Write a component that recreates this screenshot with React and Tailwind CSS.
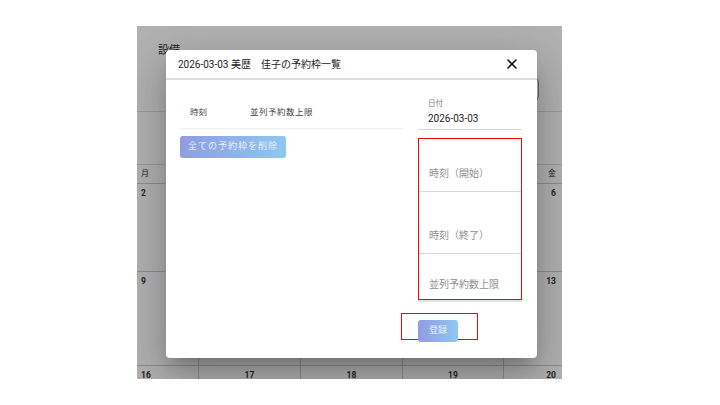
import React from 'react';
import { X } from 'lucide-react';

const font = "font-['Roboto','Noto_Sans_CJK_JP',sans-serif]";

const CalendarBackdrop = () => (
  <div className="h-full w-full bg-white text-[#333]">
    {/* Top settings area */}
    <div className="h-[86px] border-b border-[#ddd] relative">
      <div className="pl-[21px] pt-[17px] text-[11px]">設備</div>
      <div className="absolute right-[23px] top-[52px] h-[22px] w-[200px] rounded border border-[#999]" />
    </div>
    <div className="h-[52px]" />
    {/* Calendar */}
    <div className="border-t border-[#ddd]">
      <div className="grid grid-cols-[61px_102px_102px_101px_59px] h-[18px] text-[8px] items-center">
        <div className="pl-[4px]">月</div>
        <div className="text-center">火</div>
        <div className="text-center">水</div>
        <div className="text-center">木</div>
        <div className="text-right pr-[6px]">金</div>
      </div>
      {[['2', '3', '4', '5', '6'], ['9', '10', '11', '12', '13'], ['16', '17', '18', '19', '20']].map((row, i) => (
        <div key={i} className={`grid grid-cols-[61px_102px_102px_101px_59px] ${i === 0 ? 'h-[88px]' : 'h-[94px]'} border-t border-[#ccc] text-[8.5px] font-bold leading-[10px]`}>
          {row.map((d, j) => (
            <div
              key={d}
              className={`pt-[4px] ${j > 0 ? 'border-l border-[#ccc]' : ''} ${j === 0 ? 'pl-[4px]' : j === 4 ? 'text-right pr-[6px]' : 'text-center'}`}
            >
              {d}
            </div>
          ))}
        </div>
      ))}
    </div>
  </div>
);

const Field = ({ label, h }) => (
  <div className={`${h} border-b border-[#d9d9d9] flex items-end pb-[10px] pl-[10px] text-[10px] leading-[14px] text-[#909090]`}>
    <span>{label}</span>
  </div>
);

export default function App() {
  return (
    <div className={`w-[720px] h-[405px] bg-white ${font}`}>
      <div className="ml-[137px] pt-[26px]">
        <div className="relative w-[425px] h-[353px] overflow-hidden">
          <CalendarBackdrop />
          <div className="absolute inset-0 bg-black/30" />

          {/* Dialog */}
          <div className="absolute left-[29px] top-[24px] w-[371px] h-[308px] bg-white rounded-[4px] shadow-[0_11px_15px_-7px_rgba(0,0,0,0.2),0_24px_38px_3px_rgba(0,0,0,0.14),0_9px_46px_8px_rgba(0,0,0,0.12)]">
            <div className="h-[30px] flex items-center justify-between pl-[12px] pr-[17px] border-b-2 border-[#dcdcdc] text-[10px] text-[#222]">
              <span>2026-03-03 美歴　佳子の予約枠一覧</span>
              <X size={16} strokeWidth={2.4} className="text-[#111]" />
            </div>

            <div className="flex pl-[14px] pt-[16px]">
              {/* Left: slot list */}
              <div className="w-[223px]">
                <div className="h-[33px] flex items-center border-b border-[#eee] text-[8.5px] text-[#444]">
                  <span className="pl-[10px] w-[70px]">時刻</span>
                  <span className="tracking-[0.5px]">並列予約数上限</span>
                </div>
                <button className="mt-[7px] h-[22px] w-[106px] rounded-[3px] bg-gradient-to-r from-[#8f9de1] to-[#8dc8ef] text-[9px] tracking-[1px] text-[#e8eefb]">
                  全ての予約枠を削除
                </button>
              </div>

              {/* Right: form */}
              <div className="ml-[15px] w-[104px]">
                <div className="h-[34px] border-b border-[#d9d9d9] pl-[10px] pt-[3px]">
                  <div className="text-[7.5px] text-[#777] leading-[10px]">日付</div>
                  <div className="text-[10px] text-[#222] leading-[14px] mt-[3px]">2026-03-03</div>
                </div>
                <div className="mt-[8px] border border-solid border-[#ff0000]">
                  <Field label="時刻（開始）" h="h-[53px]" />
                  <Field label="時刻（終了）" h="h-[62px]" />
                  <div className="h-[45px] flex items-end pb-[7px] pl-[10px] text-[10px] leading-[14px] text-[#909090]">
                    <span>並列予約数上限</span>
                  </div>
                </div>
                <div className="h-[2px] bg-[#e3e3e3]" />
                <div className="-ml-[17px] mt-[11px] w-[77px] h-[27px] bg-[#ff0000] p-[1px]">
                  <div className="h-full w-full bg-white pl-[16px] pt-[2px]">
                    <button className="h-[22px] w-[40px] rounded-[3px] bg-gradient-to-r from-[#8f9de1] to-[#8dc8ef] text-[9px] text-[#e8eefb]">
                      登録
                    </button>
                  </div>
                </div>
              </div>
            </div>
          </div>
        </div>
      </div>
    </div>
  );
}
